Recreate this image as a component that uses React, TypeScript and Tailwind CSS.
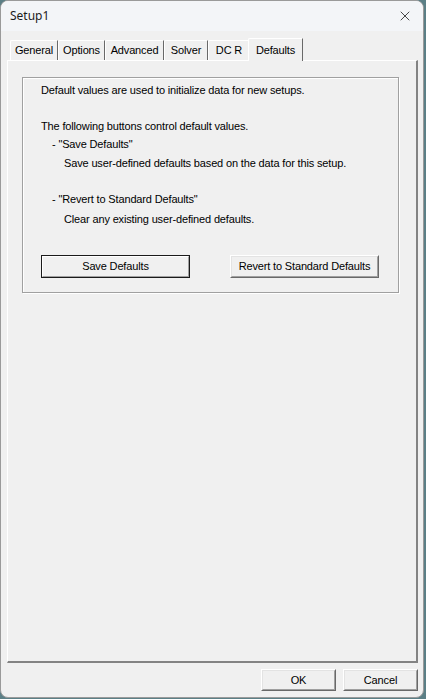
import { X } from "lucide-react";

const tabs = [
  { label: "General", w: "w-[48px]" },
  { label: "Options", w: "w-[47px]" },
  { label: "Advanced", w: "w-[59px]" },
  { label: "Solver", w: "w-[44px]" },
  { label: "DC R", w: "w-[42px]" },
];

function ClassicButton({
  label,
  isDefault,
  className,
}: {
  label: string;
  isDefault?: boolean;
  className: string;
}) {
  return (
    <button
      type="button"
      className={
        isDefault
          ? `${className} border border-[#1a1a1a] bg-[#f0f0f0] p-0 whitespace-nowrap`
          : `${className} border-t border-l border-t-white border-l-white border-r border-b border-r-[#696969] border-b-[#696969] bg-[#f0f0f0] p-0 whitespace-nowrap`
      }
    >
      <span
        className={
          isDefault
            ? "flex h-full w-full items-center justify-center border-t border-l border-t-white border-l-white border-r border-b border-r-[#a0a0a0] border-b-[#a0a0a0]"
            : "flex h-full w-full items-center justify-center border-t border-l border-t-[#e3e3e3] border-l-[#e3e3e3] border-r border-b border-r-[#a0a0a0] border-b-[#a0a0a0]"
        }
      >
        {label}
      </span>
    </button>
  );
}

export default function App() {
  return (
    <div className="h-[699px] w-[426px] bg-[#5b7f86] font-['Liberation_Sans',Arial,sans-serif] text-[11px] tracking-[-0.15px] text-black">
      <div className="flex h-[698px] w-[424px] flex-col overflow-hidden rounded-[8px] border border-[#9a9a9a] bg-[#f0f0f0]">
        <div className="flex h-[30px] shrink-0 items-center justify-between bg-[#f3f5f8] pl-[9px] pr-[10px] font-['Noto_Sans',sans-serif] tracking-normal">
          <span className="text-[12px] text-[#1b1b1b]">Setup1</span>
          <X className="h-[16px] w-[16px] text-[#1b1b1b]" strokeWidth={1.2} />
        </div>

        <div className="flex flex-1 flex-col pl-[6px] pr-[5px] pt-[6px]">
          <div className="flex h-[23px] items-end pl-[3px]">
            {tabs.map((t) => (
              <div
                key={t.label}
                className={`${t.w} flex h-[20px] items-center justify-center rounded-tl-[2px] border-t border-l border-r border-t-white border-l-white border-r-[#696969] pb-[1px]`}
              >
                {t.label}
              </div>
            ))}
            <div className="relative z-10 -mb-[1px] -ml-[2px] flex h-[23px] w-[55px] items-start justify-center rounded-tl-[2px] border-t border-l border-r border-t-white border-l-white border-r-[#696969] bg-[#f0f0f0] pt-[3px]">
              Defaults
            </div>
          </div>

          <div className="flex h-[603px] flex-col border-t border-l border-t-white border-l-white border-r-2 border-b-2 border-r-[#838383] border-b-[#838383] pl-[14px] pt-[16px]">
            <div className="h-[216px] w-[377px] border border-[#a0a0a0] shadow-[1px_1px_0_#ffffff,inset_1px_1px_0_#ffffff]">
              <div className="pl-[18px] pt-[3px] leading-[18px]">
                <p>Default values are used to initialize data for new setups.</p>
                <p className="mt-[18px]">The following buttons control default values.</p>
                <p className="pl-[11px]">- "Save Defaults"</p>
                <p className="pl-[23px] pt-[1px]">
                  Save user-defined defaults based on the data for this setup.
                </p>
                <p className="mt-[18px] pl-[11px]">- "Revert to Standard Defaults"</p>
                <p className="pl-[23px] pt-[2px]">Clear any existing user-defined defaults.</p>
              </div>
              <div className="mt-[27px] flex gap-[40px] pl-[18px]">
                <ClassicButton label="Save Defaults" isDefault className="h-[23px] w-[149px]" />
                <ClassicButton label="Revert to Standard Defaults" className="h-[23px] w-[149px]" />
              </div>
            </div>
          </div>

          <div className="flex justify-end gap-[7px] pt-[6px]">
            <ClassicButton label="OK" className="h-[22px] w-[75px]" />
            <ClassicButton label="Cancel" className="h-[22px] w-[75px]" />
          </div>
        </div>
      </div>
    </div>
  );
}
